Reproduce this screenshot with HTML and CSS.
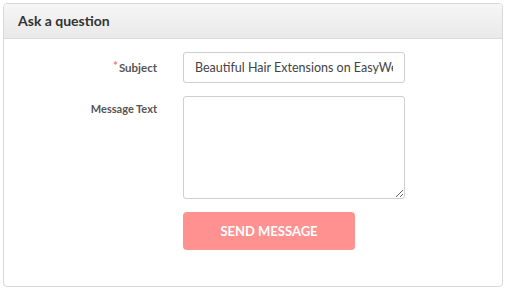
FILE: index.html
```html
<!DOCTYPE html>
<html lang="en">
<head>
    <meta charset="UTF-8">
    <title>Ask a question</title>
    <link rel="stylesheet" href="styles.css">
</head>
<body>

    <div class="painel">
        <div class="painel-topo">Ask a question</div>
        <form class="formulario">
            <label class="rotulo" for="assunto"><span class="obrigatorio">*</span>Subject</label>
            <input class="campo" id="assunto" type="text" value="Beautiful Hair Extensions on EasyWeek">

            <label class="rotulo rotulo-texto" for="mensagem">Message Text</label>
            <textarea class="campo area" id="mensagem"></textarea>

            <span></span>
            <button class="enviar" type="button">SEND MESSAGE</button>
        </form>
    </div>

</body>
</html>
```

FILE: styles.css
```css
body {
    margin: 3px;
    font-family: Lato, "Open Sans", Arial, sans-serif;
    background-color: #fff;
    color: #333;
}
.painel {
    border: 1px solid #d8d8d8;
    border-radius: 4px;
    height: 284px;
    box-sizing: border-box;
    overflow: hidden;
}
.painel-topo {
    height: 34px;
    line-height: 34px;
    padding-left: 14px;
    font-size: 14px;
    font-weight: bold;
    color: #333;
    background: linear-gradient(#f6f6f6, #e9e9e9);
    border-bottom: 1px solid #dcdcdc;
}
.formulario {
    display: grid;
    grid-template-columns: 153px 222px;
    column-gap: 26px;
    row-gap: 13px;
    padding-top: 13px;
}
.rotulo {
    text-align: right;
    font-size: 11.5px;
    font-weight: bold;
    color: #555;
    line-height: 31px;
}
.rotulo-texto {
    font-size: 11px;
    line-height: 26px;
}
.obrigatorio {
    color: #f27c7c;
    margin-right: 1px;
    position: relative;
    top: -2px;
}
.campo {
    box-sizing: border-box;
    height: 31px;
    border: 1px solid #cfcfcf;
    border-radius: 3px;
    padding: 0 11px;
    font-family: Lato, "Open Sans", Arial, sans-serif;
    font-size: 12.5px;
    color: #444;
}
.area {
    height: 103px;
    resize: vertical;
}
.enviar {
    width: 172px;
    height: 38px;
    border: none;
    border-radius: 4px;
    background-color: #ff9191;
    color: #fff;
    font-family: Lato, "Open Sans", Arial, sans-serif;
    font-size: 13px;
    font-weight: bold;
    cursor: pointer;
}
```
